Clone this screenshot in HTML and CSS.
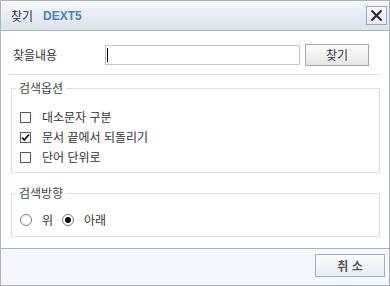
FILE: index.html
```html
<!DOCTYPE html>
<html lang="ko">
<head>
<meta charset="utf-8">
<title>찾기</title>
<link rel="stylesheet" href="styles.css">
</head>
<body>
<div class="dialog">
  <div class="header">
    <div class="title"><span class="title-ko">찾기</span><span class="brand">DEXT5</span></div>
    <button class="close" type="button" aria-label="닫기">
      <svg width="11" height="11" viewBox="0 0 11 11"><path d="M1.2 1.2 L9.8 9.8 M9.8 1.2 L1.2 9.8" stroke="#2e2e2e" stroke-width="2.2" stroke-linecap="square"/></svg>
    </button>
  </div>
  <div class="body">
    <div class="find-row">
      <label class="find-label">찾을내용</label>
      <div class="input-box"><input class="find-input" type="text"><span class="caret"></span></div>
      <button class="btn find-btn" type="button">찾기</button>
    </div>
    <div class="sep"></div>
    <fieldset class="group options">
      <legend>검색옵션</legend>
      <label class="opt"><span class="cb"></span>대소문자 구분</label>
      <label class="opt"><span class="cb checked"><svg width="11" height="11" viewBox="0 0 11 11"><path d="M2 5.5 L4.3 8 L9 2.5" fill="none" stroke="#111" stroke-width="1.8"/></svg></span>문서 끝에서 되돌리기</label>
      <label class="opt"><span class="cb"></span>단어 단위로</label>
    </fieldset>
    <fieldset class="group direction">
      <legend>검색방향</legend>
      <div class="radios">
        <label class="opt"><span class="rb"></span>위</label>
        <label class="opt"><span class="rb on"></span>아래</label>
      </div>
    </fieldset>
  </div>
  <div class="footer">
    <button class="btn cancel" type="button">취 소</button>
  </div>
</div>
</body>
</html>
```
FILE: styles.css
```css
* { box-sizing: border-box; }
html, body { margin: 0; padding: 0; background: #fff; }
body {
  font-family: "Noto Sans CJK KR", "Noto Sans", sans-serif;
  font-size: 12px;
  color: #333;
}
.dialog {
  width: 390px;
  height: 286px;
  border: 1px solid #a9b2c6;
  display: flex;
  flex-direction: column;
  background: #fff;
}
.header {
  height: 30px;
  flex: none;
  border-bottom: 1px solid #a9b3c6;
  background: linear-gradient(#f4f6fa, #dce2eb);
  display: flex;
  align-items: center;
  justify-content: space-between;
  padding: 0 2px 0 10px;
}
.title { display: flex; align-items: center; line-height: 14px; }
.title-ko { font-size: 12px; color: #333; }
.brand {
  font-family: "Liberation Sans", Arial, sans-serif;
  font-weight: bold;
  font-size: 12px;
  color: #4e7fc2;
  margin-left: 10px;
}
.close {
  width: 21px;
  height: 19px;
  padding: 0;
  border: 1px solid #9ba5b7;
  background: linear-gradient(#fbfcfd, #e6eaf0);
  display: flex;
  align-items: center;
  justify-content: center;
}
.body {
  flex: 1;
  padding: 0 7px;
  display: flex;
  flex-direction: column;
}
.find-row {
  margin-top: 13px;
  height: 22px;
  display: flex;
  align-items: center;
  padding-left: 5px;
}
.find-label { width: 92px; line-height: 14px; color: #333; }
.input-box {
  position: relative;
  width: 195px;
  height: 20px;
  border: 1px solid #c4c4c4;
  background: #fff;
}
.find-input {
  width: 100%;
  height: 100%;
  border: 0;
  outline: none;
  background: transparent;
  padding: 0;
}
.caret {
  position: absolute;
  left: 1px;
  top: 2px;
  width: 1px;
  height: 14px;
  background: #000;
}
.btn {
  font-family: "Noto Sans CJK KR", "Noto Sans", sans-serif;
  font-size: 12px;
  padding: 0;
  line-height: 14px;
}
.find-btn {
  margin-left: 5px;
  width: 64px;
  height: 22px;
  border: 1px solid #a6a6a6;
  background: linear-gradient(#fdfdfd, #e6e6e6);
  color: #333;
}
.sep {
  margin-top: 8px;
  height: 1px;
  background: #e2e2e2;
}
.group {
  margin: 6px 2px 0 3px;
  border: 1px solid #dedede;
  padding: 12px 8px 5px 8px;
  min-width: 0;
}
.group legend {
  margin-left: -4px;
  padding: 0 3px;
  line-height: 14px;
  color: #444;
}
.direction {
  margin-top: 13px;
  padding-top: 10px;
  padding-bottom: 6px;
}
.opt {
  height: 20px;
  display: flex;
  align-items: center;
  line-height: 14px;
  color: #333;
}
.cb {
  width: 11px;
  height: 11px;
  border: 1px solid #5a5a5a;
  background: #fff;
  margin-right: 11px;
  display: flex;
  align-items: center;
  justify-content: center;
}
.cb svg { flex: none; }
.radios { display: flex; }
.radios .opt { margin-right: 9px; }
.rb {
  width: 12px;
  height: 12px;
  border: 1px solid #7a7a7a;
  border-radius: 50%;
  background: #fff;
  margin-right: 10px;
  display: flex;
  align-items: center;
  justify-content: center;
}
.rb.on::after {
  content: "";
  width: 6px;
  height: 6px;
  border-radius: 50%;
  background: #111;
}
.footer {
  flex: none;
  height: 37px;
  border-top: 1px solid #a9b2c6;
  background: #f5f7fc;
  display: flex;
  justify-content: flex-end;
  align-items: flex-start;
  padding: 5px 4px 0 0;
}
.cancel {
  width: 70px;
  height: 23px;
  border: 1px solid #a4adbf;
  background: linear-gradient(#fbfcfe, #e8ecf3);
  color: #555;
  font-weight: bold;
}
```
